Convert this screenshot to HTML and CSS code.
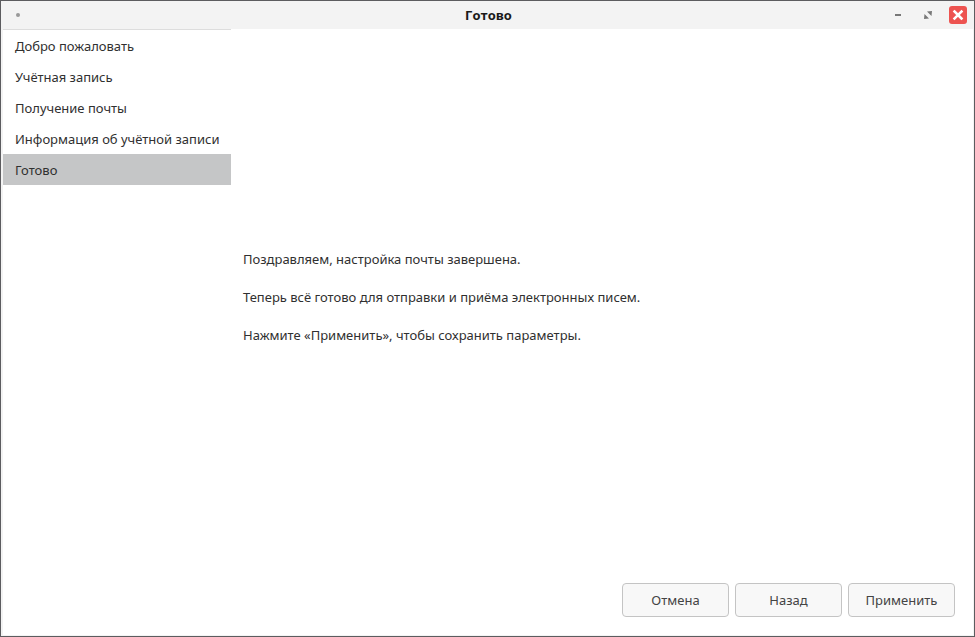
FILE: index.html
```html
<!DOCTYPE html>
<html lang="ru">
<head>
  <meta charset="UTF-8" />
  <meta name="viewport" content="width=device-width, initial-scale=1" />
  <title>Готово</title>
  <link rel="stylesheet" href="styles.css">
</head>
<body>
  <div class="window">
    <header class="titlebar">
      <span class="menu-dot"></span>
      <h1>Готово</h1>
      <div class="controls">
        <button class="control" aria-label="Свернуть">
          <svg width="18" height="18" viewBox="0 0 18 18"><path d="M6 8h6v2H6z" fill="#777" /></svg>
        </button>
        <button class="control" aria-label="Развернуть">
          <svg width="18" height="18" viewBox="0 0 18 18"><path d="M8 5.5l5-.5-.5 5zM5.500 8l4.500 4.500-5 .5z" fill="#777" /></svg>
        </button>
        <button class="control close" aria-label="Закрыть">
          <svg width="18" height="18" viewBox="0 0 18 18"><path d="M5.500 5.500l7 7M12.500 5.500l-7 7" stroke="#fff" stroke-width="2.500" stroke-linecap="square" /></svg>
        </button>
      </div>
    </header>

    <div class="content">
      <nav class="sidebar">
        <ul>
          <li>Добро пожаловать</li>
          <li>Учётная запись</li>
          <li>Получение почты</li>
          <li>Информация об учётной записи</li>
          <li class="active">Готово</li>
        </ul>
      </nav>

      <main class="page">
        <div class="message">
          <p>Поздравляем, настройка почты завершена.</p>
          <p>Теперь всё готово для отправки и приёма электронных писем.</p>
          <p>Нажмите «Применить», чтобы сохранить параметры.</p>
        </div>
        <div class="actions">
          <button class="btn">Отмена</button>
          <button class="btn">Назад</button>
          <button class="btn">Применить</button>
        </div>
      </main>
    </div>
  </div>
</body>
</html>
```

FILE: styles.css
```css
* {
  box-sizing: border-box;
}
body {
  margin: 0;
  font-family: "Noto Sans", sans-serif;
  font-size: 13px;
  line-height: 19px;
  color: #303030;
}
.window {
  display: flex;
  flex-direction: column;
  min-height: 100vh;
  background: #f3f3f3;
  border: 1px solid #5c5c5f;
}
.titlebar {
  display: grid;
  grid-template-columns: 1fr auto 1fr;
  align-items: center;
  height: 28px;
  padding: 0 7px 0 9px;
}
.titlebar h1 {
  margin: 0;
  color: #1a1a1a;
  font-family: "Open Sans", sans-serif;
  font-size: 13px;
  font-weight: bold;
}
.menu-dot {
  width: 4px;
  height: 4px;
  margin-left: 6px;
  border-radius: 50%;
  background: #999;
}
.controls {
  display: flex;
  justify-content: flex-end;
  gap: 12px;
}
.control {
  width: 18px;
  height: 18px;
  padding: 0;
  border: none;
  background: none;
}
.control svg {
  display: block;
}
.close {
  border-radius: 3px;
  background: #ed5350;
}
.content {
  display: flex;
  flex: 1;
  margin: 0 1px 1px 2px;
  background: #fff;
}
.sidebar {
  width: 228px;
  border-top: 1px solid #ddd;
}
.sidebar ul {
  margin: 0;
  padding: 0;
  list-style: none;
}
.sidebar li {
  padding: 7px 0 5px 12px;
  white-space: nowrap;
}
.sidebar .active {
  background: #c5c6c7;
}
.page {
  display: flex;
  flex: 1;
  flex-direction: column;
}
.message {
  display: flex;
  flex: 1;
  flex-direction: column;
  justify-content: center;
  gap: 19px;
  padding: 0 12px 6px;
}
.message p {
  margin: 0;
}
.actions {
  display: flex;
  justify-content: flex-end;
  gap: 6px;
  padding: 12px 18px 18px;
}
.btn {
  width: 107px;
  height: 34px;
  padding: 0;
  border: 1px solid #c4c4c4;
  border-radius: 4px;
  background: #f8f8f8;
  color: #444;
  font: inherit;
}
```
